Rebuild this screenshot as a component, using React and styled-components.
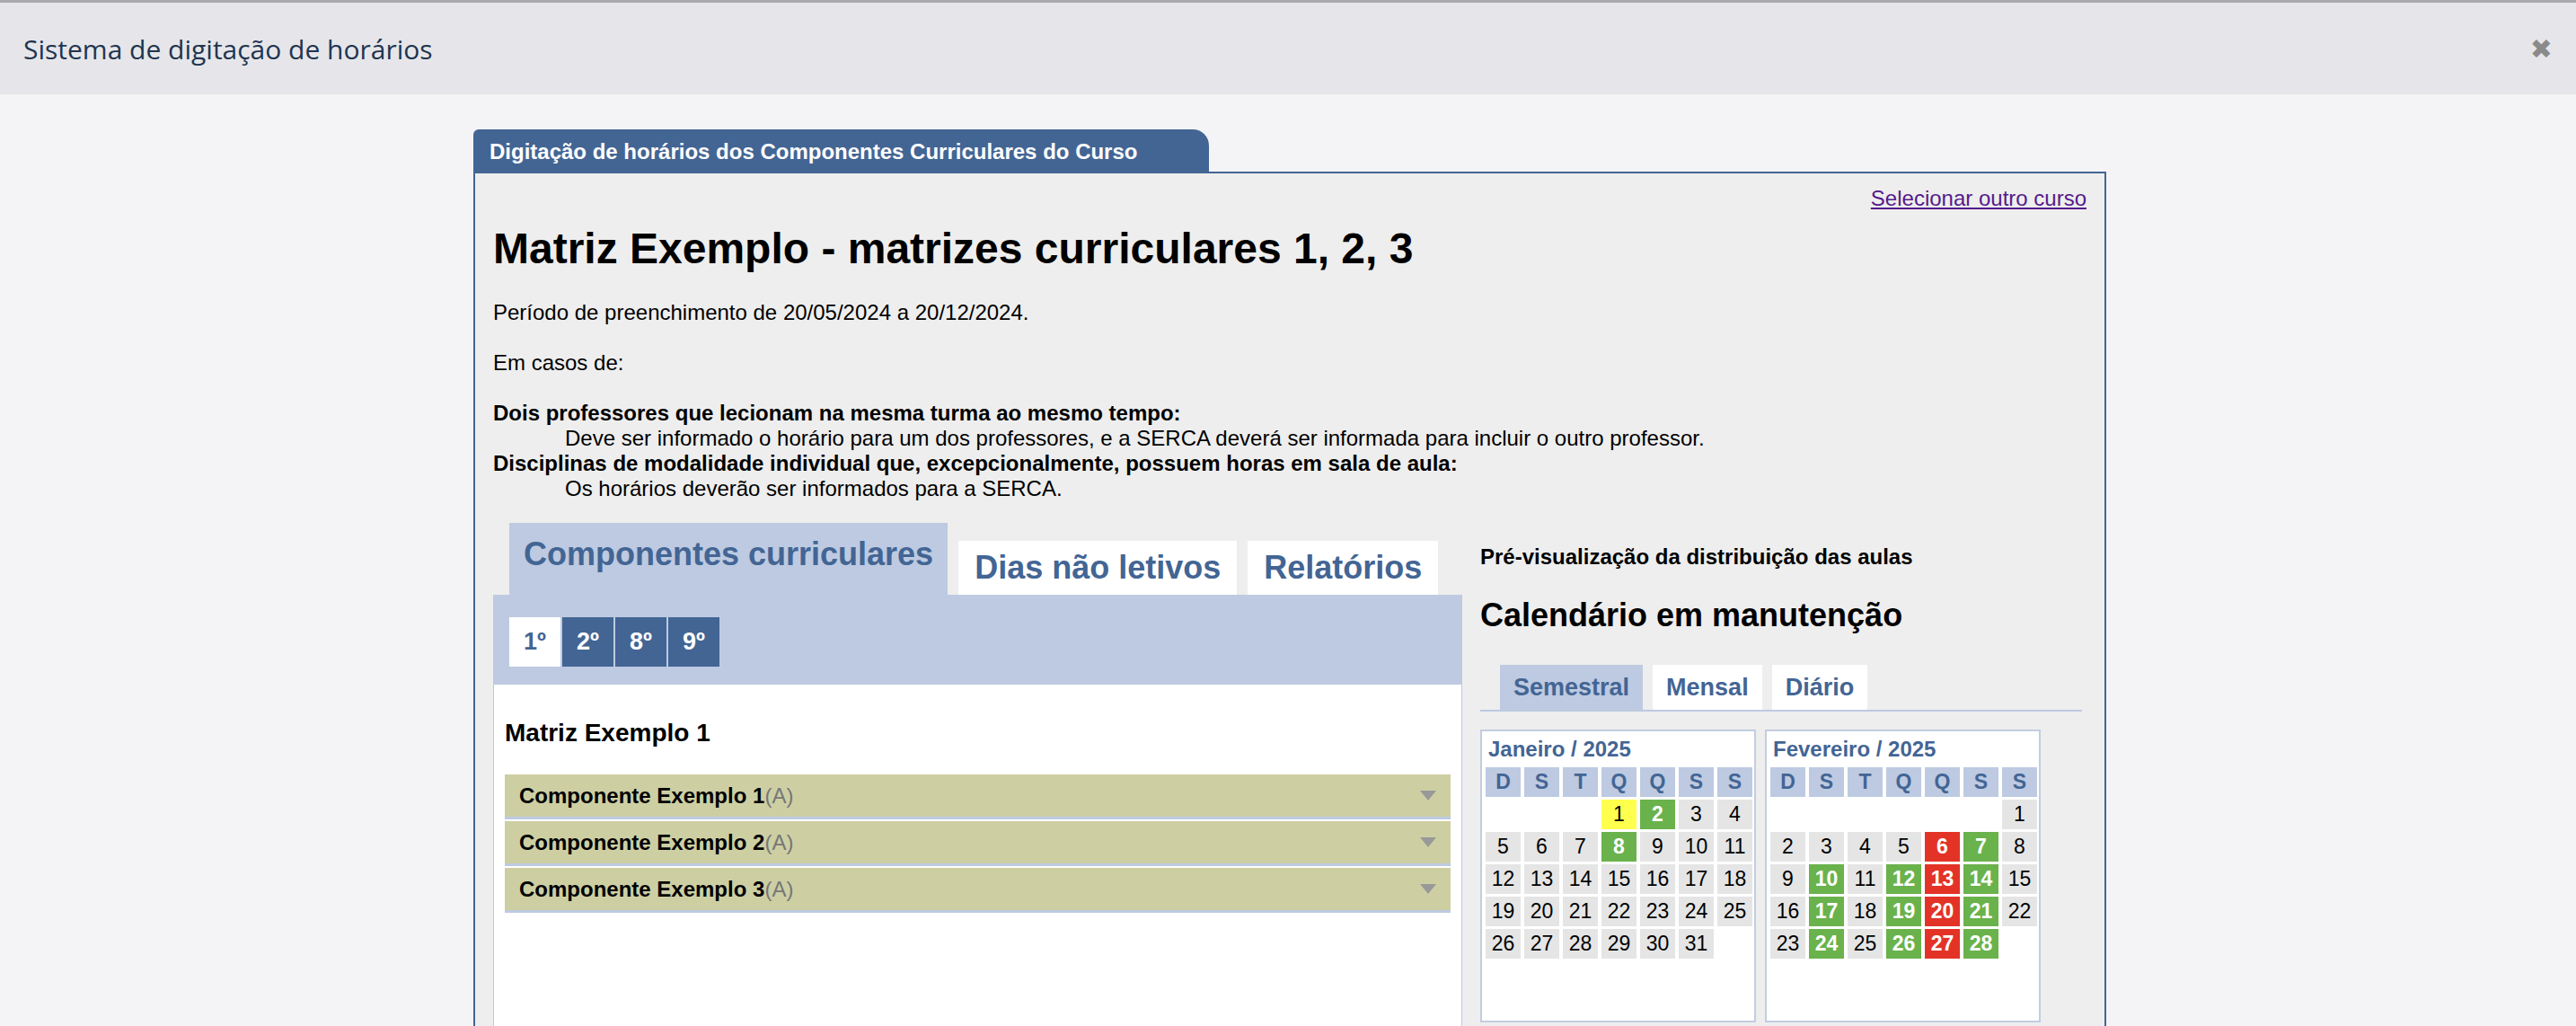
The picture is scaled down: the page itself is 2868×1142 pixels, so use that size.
import React from "react";
import styled, { createGlobalStyle } from "styled-components";

const Global = createGlobalStyle`
  html, body { margin: 0; padding: 0; background: #f4f4f6; overflow: hidden; }
  body { font-family: "Liberation Sans", Arial, sans-serif; color: #000; }
`;

const blue = "#436594";
const light = "#bdcae1";

const TopBar = styled.header`
  height: 102px;
  border-top: 3px solid #a9a9ab;
  background: #e6e6ea;
  display: flex;
  align-items: center;
  justify-content: space-between;
  padding: 0 26px;
`;

const TopTitle = styled.h1`
  margin: 0;
  font-family: "Open Sans", sans-serif;
  font-weight: 400;
  font-size: 30px;
  color: #1f3550;
`;

const Close = styled.span`
  font-size: 30px;
  font-weight: 700;
  color: #8a8a8a;
  font-family: "DejaVu Sans", sans-serif;
`;

const Wrap = styled.div`
  margin: 39px 0 0 527px;
  width: 1818px;
`;

const PanelTab = styled.div`
  display: inline-block;
  background: ${blue};
  color: #fff;
  font-weight: 700;
  font-size: 24px;
  height: 47px;
  line-height: 50px;
  padding: 0 80px 0 18px;
  border-radius: 6px 18px 0 0;
`;

const Panel = styled.div`
  border: 2px solid ${blue};
  background: #eeeeee;
  padding: 14px 20px 0 20px;
  min-height: 1200px;
`;

const LinkRow = styled.div`
  text-align: right;
  font-size: 24px;
  a { color: #551a8b; }
`;

const Title = styled.h2`
  margin: 14px 0 30px;
  font-size: 48px;
  font-weight: 700;
`;

const P = styled.p`
  margin: 0 0 28px;
  font-size: 24px;
`;

const Cases = styled.div`
  font-size: 24px;
  line-height: 28px;
  b { display: block; }
  div { padding-left: 80px; }
`;

const Columns = styled.div`
  display: flex;
  gap: 20px;
  margin-top: 24px;
`;

const Left = styled.div`
  width: 1079px;
`;

const TabBar = styled.div`
  display: flex;
  align-items: flex-end;
  gap: 12px;
  padding-left: 18px;
`;

const BigTab = styled.div`
  background: ${(p) => (p.$active ? light : "#fff")};
  color: ${blue};
  font-weight: 700;
  font-size: 36px;
  height: ${(p) => (p.$active ? 80 : 60)}px;
  padding: 0 ${(p) => (p.$active ? 16 : 18)}px;
  display: flex;
  align-items: ${(p) => (p.$active ? "flex-start" : "center")};
  padding-top: ${(p) => (p.$active ? 14 : 0)}px;
  box-sizing: border-box;
`;

const GradeBar = styled.div`
  background: ${light};
  padding: 25px 18px 20px;
  display: flex;
  gap: 2px;
`;

const Grade = styled.div`
  width: 57px;
  height: 55px;
  display: flex;
  align-items: center;
  justify-content: center;
  font-size: 27px;
  font-weight: 700;
  background: ${(p) => (p.$active ? "#fff" : blue)};
  color: ${(p) => (p.$active ? blue : "#fff")};
`;

const WhiteArea = styled.div`
  background: #fff;
  border: 1px solid ${light};
  border-top: none;
  padding: 38px 12px 0;
  min-height: 600px;
`;

const SubTitle = styled.h3`
  margin: 0 0 30px;
  font-size: 28px;
  font-weight: 700;
`;

const Accordion = styled.div`
  background: #cdcfa3;
  border-bottom: 3px solid ${light};
  height: 47px;
  margin-bottom: 2px;
  padding: 0 16px;
  display: flex;
  align-items: center;
  justify-content: space-between;
  font-size: 24px;
  font-weight: 700;
  span { color: #777; font-weight: 400; }
`;

const Caret = styled.i`
  width: 0;
  height: 0;
  border-left: 9px solid transparent;
  border-right: 9px solid transparent;
  border-top: 11px solid #999;
`;

const Right = styled.div`
  width: 670px;
`;

const PreTitle = styled.div`
  margin-top: 24px;
  font-size: 24px;
  font-weight: 700;
`;

const CalTitle = styled.div`
  margin-top: 30px;
  font-size: 36px;
  font-weight: 700;
`;

const SmallTabs = styled.div`
  display: flex;
  gap: 11px;
  padding-left: 22px;
  margin-top: 34px;
  border-bottom: 2px solid ${light};
`;

const SmallTab = styled.div`
  background: ${(p) => (p.$active ? light : "#fff")};
  color: ${blue};
  font-weight: 700;
  font-size: 27px;
  height: 50px;
  padding: 0 15px;
  display: flex;
  align-items: center;
`;

const Months = styled.div`
  display: grid;
  grid-template-columns: 307px 307px;
  gap: 10px;
  margin-top: 20px;
`;

const Month = styled.div`
  background: #fff;
  border: 2px solid #c3cde0;
  height: 326px;
  box-sizing: border-box;
  padding: 6px 4px;
`;

const MonthName = styled.div`
  color: ${blue};
  font-weight: 700;
  font-size: 24px;
  padding-left: 3px;
  margin-bottom: 6px;
`;

const Grid = styled.div`
  display: grid;
  grid-template-columns: repeat(7, 39px);
  grid-auto-rows: 33px;
  column-gap: 4px;
  row-gap: 3px;
`;

const Cell = styled.div`
  display: flex;
  align-items: center;
  justify-content: center;
  font-size: 23px;
  font-weight: ${(p) => (p.$bold ? 700 : 400)};
  background: ${(p) => p.$bg};
  color: ${(p) => p.$fg};
`;

const cellColors = {
  n: ["#e5e5e5", "#000"],
  y: ["#ffff4d", "#000"],
  g: ["#6ab24c", "#fff"],
  r: ["#e33327", "#fff"],
};

const CalMonth = ({ name, offset, days, marks }) => (
  <Month>
    <MonthName>{name}</MonthName>
    <Grid>
      {["D", "S", "T", "Q", "Q", "S", "S"].map((d, i) => (
        <Cell key={"h" + i} $bg={light} $fg={blue} $bold>
          {d}
        </Cell>
      ))}
      {Array.from({ length: offset }).map((_, i) => (
        <div key={"e" + i} />
      ))}
      {Array.from({ length: days }).map((_, i) => {
        const k = marks[i + 1] || "n";
        const [bg, fg] = cellColors[k];
        return (
          <Cell key={i} $bg={bg} $fg={fg} $bold={k === "g" || k === "r"}>
            {i + 1}
          </Cell>
        );
      })}
    </Grid>
  </Month>
);

const App = () => (
  <>
    <Global />
    <TopBar>
      <TopTitle>Sistema de digitação de horários</TopTitle>
      <Close>✖</Close>
    </TopBar>
    <Wrap>
      <PanelTab>Digitação de horários dos Componentes Curriculares do Curso</PanelTab>
      <Panel>
        <LinkRow>
          <a href="#">Selecionar outro curso</a>
        </LinkRow>
        <Title>Matriz Exemplo - matrizes curriculares 1, 2, 3</Title>
        <P>Período de preenchimento de 20/05/2024 a 20/12/2024.</P>
        <P>Em casos de:</P>
        <Cases>
          <b>Dois professores que lecionam na mesma turma ao mesmo tempo:</b>
          <div>Deve ser informado o horário para um dos professores, e a SERCA deverá ser informada para incluir o outro professor.</div>
          <b>Disciplinas de modalidade individual que, excepcionalmente, possuem horas em sala de aula:</b>
          <div>Os horários deverão ser informados para a SERCA.</div>
        </Cases>
        <Columns>
          <Left>
            <TabBar>
              <BigTab $active>Componentes curriculares</BigTab>
              <BigTab>Dias não letivos</BigTab>
              <BigTab>Relatórios</BigTab>
            </TabBar>
            <GradeBar>
              <Grade $active>1º</Grade>
              <Grade>2º</Grade>
              <Grade>8º</Grade>
              <Grade>9º</Grade>
            </GradeBar>
            <WhiteArea>
              <SubTitle>Matriz Exemplo 1</SubTitle>
              {[1, 2, 3].map((n) => (
                <Accordion key={n}>
                  <div>
                    Componente Exemplo {n}
                    <span>(A)</span>
                  </div>
                  <Caret />
                </Accordion>
              ))}
            </WhiteArea>
          </Left>
          <Right>
            <PreTitle>Pré-visualização da distribuição das aulas</PreTitle>
            <CalTitle>Calendário em manutenção</CalTitle>
            <SmallTabs>
              <SmallTab $active>Semestral</SmallTab>
              <SmallTab>Mensal</SmallTab>
              <SmallTab>Diário</SmallTab>
            </SmallTabs>
            <Months>
              <CalMonth name="Janeiro / 2025" offset={3} days={31} marks={{ 1: "y", 2: "g", 8: "g" }} />
              <CalMonth
                name="Fevereiro / 2025"
                offset={6}
                days={28}
                marks={{ 6: "r", 7: "g", 10: "g", 12: "g", 13: "r", 14: "g", 17: "g", 19: "g", 20: "r", 21: "g", 24: "g", 26: "g", 27: "r", 28: "g" }}
              />
              <Month />
              <Month />
            </Months>
          </Right>
        </Columns>
      </Panel>
    </Wrap>
  </>
);

export default App;
